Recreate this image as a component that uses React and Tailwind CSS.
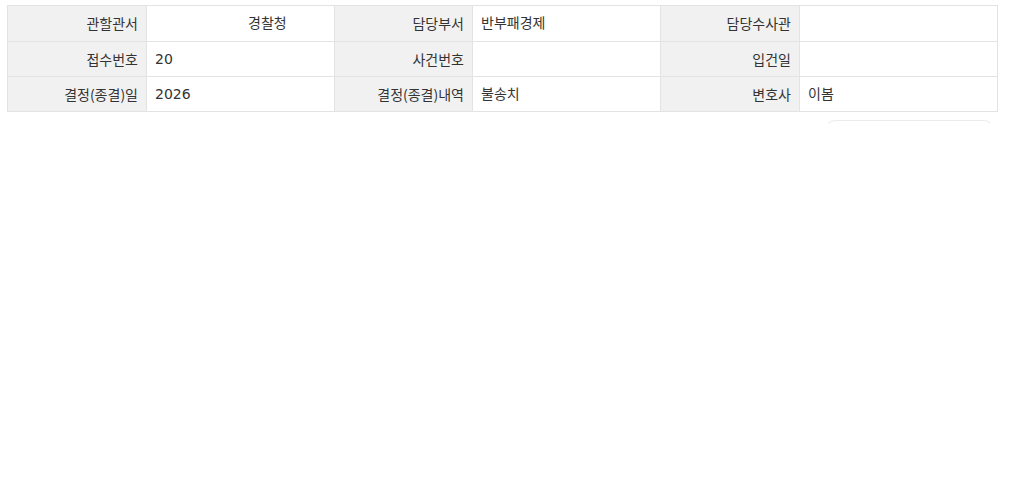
import React from 'react';

const rows = [
  [
    { label: '관할관서', value: '경찰청', pad: 'pl-[101px]' },
    { label: '담당부서', value: '반부패경제' },
    { label: '담당수사관', value: '' },
  ],
  [
    { label: '접수번호', value: '20' },
    { label: '사건번호', value: '' },
    { label: '입건일', value: '' },
  ],
  [
    { label: '결정(종결)일', value: '2026' },
    { label: '결정(종결)내역', value: '불송치' },
    { label: '변호사', value: '이봄' },
  ],
];

const App = () => {
  return (
    <div
      className="w-[1024px] h-[504px] bg-white text-[14px] text-[#333]"
      style={{ fontFamily: '"Noto Sans CJK KR", "Noto Sans", sans-serif' }}
    >
      <div className="pt-[5px] pl-[7px]">
        <table className="w-[991px] border-collapse border border-[#e3e3e3] table-fixed">
          <colgroup>
            <col className="w-[139px]" />
            <col className="w-[188px]" />
            <col className="w-[138px]" />
            <col className="w-[188px]" />
            <col className="w-[139px]" />
            <col />
          </colgroup>
          <tbody>
            {rows.map((row, i) => (
              <tr key={i} className={i === 0 ? 'h-[36px]' : 'h-[35px]'}>
                {row.map((cell, j) => (
                  <React.Fragment key={j}>
                    <th className="bg-[#f1f1f1] border border-[#e3e3e3] text-right font-normal pr-[8px] whitespace-nowrap">
                      {cell.label}
                    </th>
                    <td
                      className={`border border-[#e3e3e3] bg-white whitespace-nowrap overflow-hidden font-['DejaVu_Sans','Noto_Sans_CJK_KR',sans-serif] ${cell.pad || 'pl-[8px]'}`}
                    >
                      {cell.value}
                    </td>
                  </React.Fragment>
                ))}
              </tr>
            ))}
          </tbody>
        </table>

        {/* faint card edge below table */}
        <div className="flex justify-end pr-[30px] pt-[8px]">
          <div className="w-[169px] h-[10px] border-t border-x border-[#ececec] rounded-t-[12px] border-x-transparent" />
        </div>
      </div>
    </div>
  );
};

export default App;
